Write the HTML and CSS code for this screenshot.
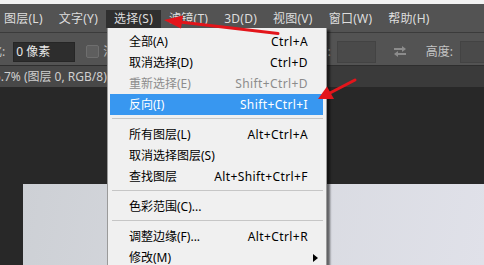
FILE: index.html
```html
<!DOCTYPE html>
<html>
<head>
<meta charset="utf-8">
<link rel="stylesheet" href="styles.css">
</head>
<body>
<div class="app">
  <div class="topstrip"></div>
  <div class="menubar">
    <span class="mb-item">图层(L)</span>
    <span class="mb-item">文字(Y)</span>
    <span class="mb-item active">选择(S)</span>
    <span class="mb-item">滤镜(T)</span>
    <span class="mb-item">3D(D)</span>
    <span class="mb-item">视图(V)</span>
    <span class="mb-item">窗口(W)</span>
    <span class="mb-item">帮助(H)</span>
  </div>
  <div class="options">
    <span class="opt-label lead">羽化:</span>
    <span class="field">0 像素</span>
    <span class="check"></span>
    <span class="opt-label after-check">消除锯齿</span>
    <div class="opt-right">
      <span class="opt-label">宽度:</span>
      <span class="field dim w1"></span>
      <svg class="swap" width="14" height="11" viewBox="0 0 14 11">
        <rect x="1" y="2" width="8" height="2" fill="#8c8c8c"/>
        <polygon points="9,0 13,3 9,6" fill="#8c8c8c"/>
        <rect x="5" y="7" width="8" height="2" fill="#8c8c8c"/>
        <polygon points="5,5 1,8 5,11" fill="#8c8c8c"/>
      </svg>
      <span class="opt-label h-label">高度:</span>
      <span class="field dim w2"></span>
    </div>
  </div>
  <div class="tabbar">
    <div class="tab"><span class="tab-text">66.7% (图层 0, RGB/8) *</span></div>
  </div>
  <div class="canvas">
    <div class="doc"></div>
  </div>
</div>

<div class="dropdown">
  <div class="dd-row"><span>全部(A)</span><span class="sc">Ctrl+A</span></div>
  <div class="dd-row"><span>取消选择(D)</span><span class="sc">Ctrl+D</span></div>
  <div class="dd-row dis"><span>重新选择(E)</span><span class="sc">Shift+Ctrl+D</span></div>
  <div class="dd-row hl"><span>反向(I)</span><span class="sc">Shift+Ctrl+I</span></div>
  <div class="dd-sep"></div>
  <div class="dd-row"><span>所有图层(L)</span><span class="sc">Alt+Ctrl+A</span></div>
  <div class="dd-row"><span>取消选择图层(S)</span><span class="sc"></span></div>
  <div class="dd-row"><span>查找图层</span><span class="sc">Alt+Shift+Ctrl+F</span></div>
  <div class="dd-sep"></div>
  <div class="dd-row"><span>色彩范围(C)...</span><span class="sc"></span></div>
  <div class="dd-sep"></div>
  <div class="dd-row"><span>调整边缘(F)...</span><span class="sc">Alt+Ctrl+R</span></div>
  <div class="dd-row"><span>修改(M)</span><span class="sub-arrow"></span></div>
</div>

<svg class="annot" width="484" height="265" viewBox="0 0 484 265">
  <line x1="278" y1="33.5" x2="180" y2="22" stroke="#e3151b" stroke-width="3" stroke-linecap="round"/>
  <polygon points="164,20 183,15.5 181,28.5" fill="#e3151b"/>
  <line x1="355" y1="80" x2="328" y2="94" stroke="#e3151b" stroke-width="3" stroke-linecap="round"/>
  <polygon points="318,99 327,86.5 334,99" fill="#e3151b"/>
</svg>
</body>
</html>
```

FILE: styles.css
```css
* {
  box-sizing: border-box;
  margin: 0;
  padding: 0;
}

html, body {
  width: 484px;
  height: 265px;
  overflow: hidden;
}

body {
  position: relative;
  background: #282828;
  font-family: "Noto Sans", "Noto Sans CJK SC", sans-serif;
  font-size: 12px;
}

.app {
  display: flex;
  flex-direction: column;
  height: 265px;
}

.topstrip {
  height: 4px;
  background: #f2f2f2;
  flex: none;
}

.menubar {
  flex: none;
  height: 29px;
  background: #535353;
  border-bottom: 1px solid #3b3b3b;
  display: flex;
  padding-top: 6px;
  color: #dedede;
}

.mb-item {
  height: 18px;
  line-height: 18px;
  padding: 0 8px;
  letter-spacing: 0.25px;
  white-space: nowrap;
}

.mb-item:first-child {
  padding-left: 4px;
}

.mb-item.active {
  background: #2f2f2f;
}

.options {
  flex: none;
  height: 33px;
  background: #535353;
  border-bottom: 1px solid #2e2e2e;
  display: flex;
  align-items: center;
  padding-top: 5px;
  color: #c4c4c4;
  overflow: hidden;
  white-space: nowrap;
}

.opt-label {
  line-height: 20px;
}

.lead {
  margin-left: -22px;
}

.field {
  display: block;
  height: 20px;
  width: 62px;
  margin-left: 8px;
  background: #2d2d2d;
  border: 1px solid #262626;
  color: #e8e8e8;
  padding-left: 2px;
  line-height: 18px;
}

.check {
  display: block;
  width: 13px;
  height: 13px;
  margin-left: 11px;
  background: #5e5e5e;
  border: 1px solid #6e6e6e;
  border-radius: 2px;
}

.after-check {
  margin-left: 4px;
  width: 4px;
  overflow: hidden;
}

.opt-right {
  margin-left: auto;
  margin-right: -16px;
  display: flex;
  align-items: center;
}

.field.dim {
  height: 22px;
  background: #4a4a4a;
  border: 1px solid #434343;
}

.field.w1 {
  width: 39px;
  margin-left: 6px;
}

.swap {
  display: block;
  margin-left: 17px;
}

.h-label {
  margin-left: 19px;
}

.field.w2 {
  width: 40px;
  margin-left: 7px;
}

.tabbar {
  flex: none;
  height: 21px;
  background: #3a3a3a;
  display: flex;
}

.tab {
  width: 200px;
  background: #484848;
  color: #cfcfcf;
  line-height: 21px;
  overflow: hidden;
  white-space: nowrap;
}

.tab-text {
  display: inline-block;
  margin-left: -13px;
}

.canvas {
  flex: 1;
  padding-left: 23px;
  padding-top: 97px;
  display: flex;
  flex-direction: column;
}

.doc {
  flex: 1;
  background: linear-gradient(100deg, #cdd0d5 0%, #d6d8de 40%, #e0e1e9 100%);
}

.dropdown {
  position: absolute;
  left: 107px;
  top: 28px;
  width: 220px;
  height: 250px;
  background: #f0f0f0;
  border: 1px solid #9a9a9a;
  border-top: none;
  padding: 3px 3px 0 2px;
  box-shadow: 3px 2px 2px rgba(0, 0, 0, 0.55);
  color: #000;
  z-index: 5;
}

.dd-row {
  position: relative;
  display: flex;
  justify-content: space-between;
  height: 21px;
  line-height: 21px;
  padding: 0 15px 0 19px;
  white-space: nowrap;
}

.dd-row.dis {
  color: #8c8c8c;
}

.dd-row.hl {
  background: #3897f0;
  color: #fff;
}

.sc {
  letter-spacing: 0.4px;
}

.dd-sep {
  height: 9px;
  padding-top: 3px;
}

.dd-sep::before {
  content: "";
  display: block;
  height: 1px;
  margin-left: 2px;
  background: #c6c6c6;
}

.sub-arrow {
  position: absolute;
  right: 5px;
  top: 7px;
  width: 0;
  height: 0;
  border-left: 5px solid #000;
  border-top: 4px solid transparent;
  border-bottom: 4px solid transparent;
}

.annot {
  position: absolute;
  left: 0;
  top: 0;
  z-index: 10;
  pointer-events: none;
}
```
